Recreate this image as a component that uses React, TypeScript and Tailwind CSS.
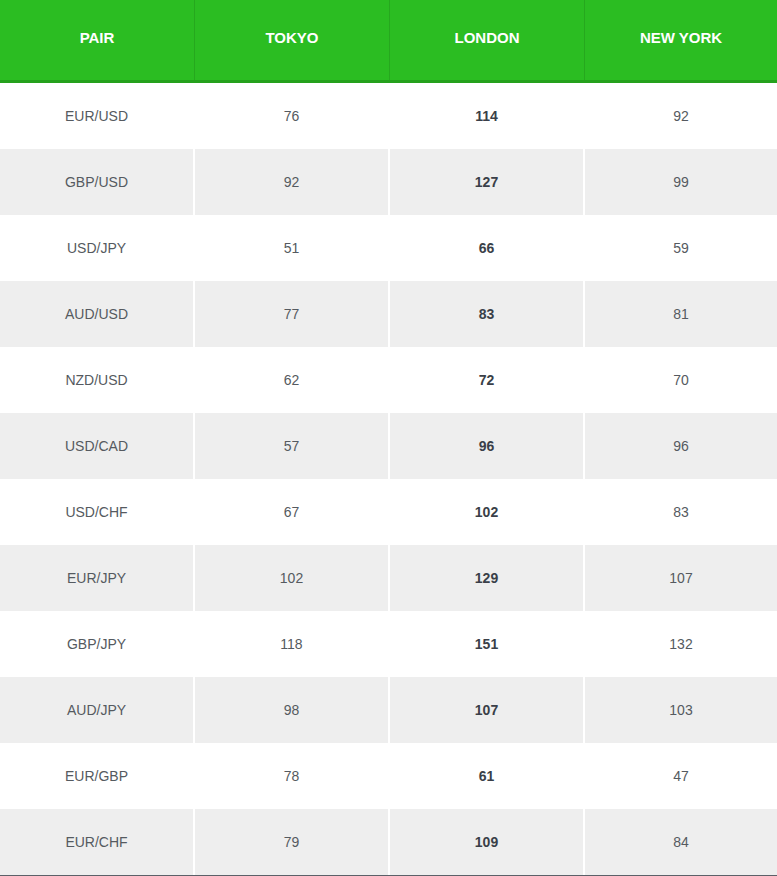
const rows: [string, number, number, number][] = [
  ["EUR/USD", 76, 114, 92],
  ["GBP/USD", 92, 127, 99],
  ["USD/JPY", 51, 66, 59],
  ["AUD/USD", 77, 83, 81],
  ["NZD/USD", 62, 72, 70],
  ["USD/CAD", 57, 96, 96],
  ["USD/CHF", 67, 102, 83],
  ["EUR/JPY", 102, 129, 107],
  ["GBP/JPY", 118, 151, 132],
  ["AUD/JPY", 98, 107, 103],
  ["EUR/GBP", 78, 61, 47],
  ["EUR/CHF", 79, 109, 84],
];

const heads = ["PAIR", "TOKYO", "LONDON", "NEW YORK"];

export default function App() {
  return (
    <div className="w-[777px] bg-white font-['Liberation_Sans',Arial,sans-serif]">
      <div className="grid grid-cols-[195px_195px_195px_192px] h-[83px] bg-[#2bbd22] border-b-[3px] border-[#25a11d]">
        {heads.map((h, i) => (
          <div
            key={h}
            className={`flex items-center justify-center pb-1 text-[15px] font-bold text-white ${
              i < 3 ? "border-r border-[#26a81e]" : ""
            }`}
          >
            {h}
          </div>
        ))}
      </div>
      <div className="border-b border-[#5b6068]">
        {rows.map((r, idx) => (
          <div key={r[0]} className="grid grid-cols-[195px_195px_195px_192px] h-[66px]">
            {r.map((v, i) => (
              <div
                key={i}
                className={`flex items-center justify-center text-[14px] ${
                  idx % 2 === 1 ? "bg-[#eeeeee]" : "bg-white"
                } ${i < 3 ? "border-r-2 border-white" : ""} ${
                  i === 2 ? "font-bold text-[#3a3f48]" : "text-[#555a60]"
                }`}
              >
                {v}
              </div>
            ))}
          </div>
        ))}
      </div>
    </div>
  );
}
